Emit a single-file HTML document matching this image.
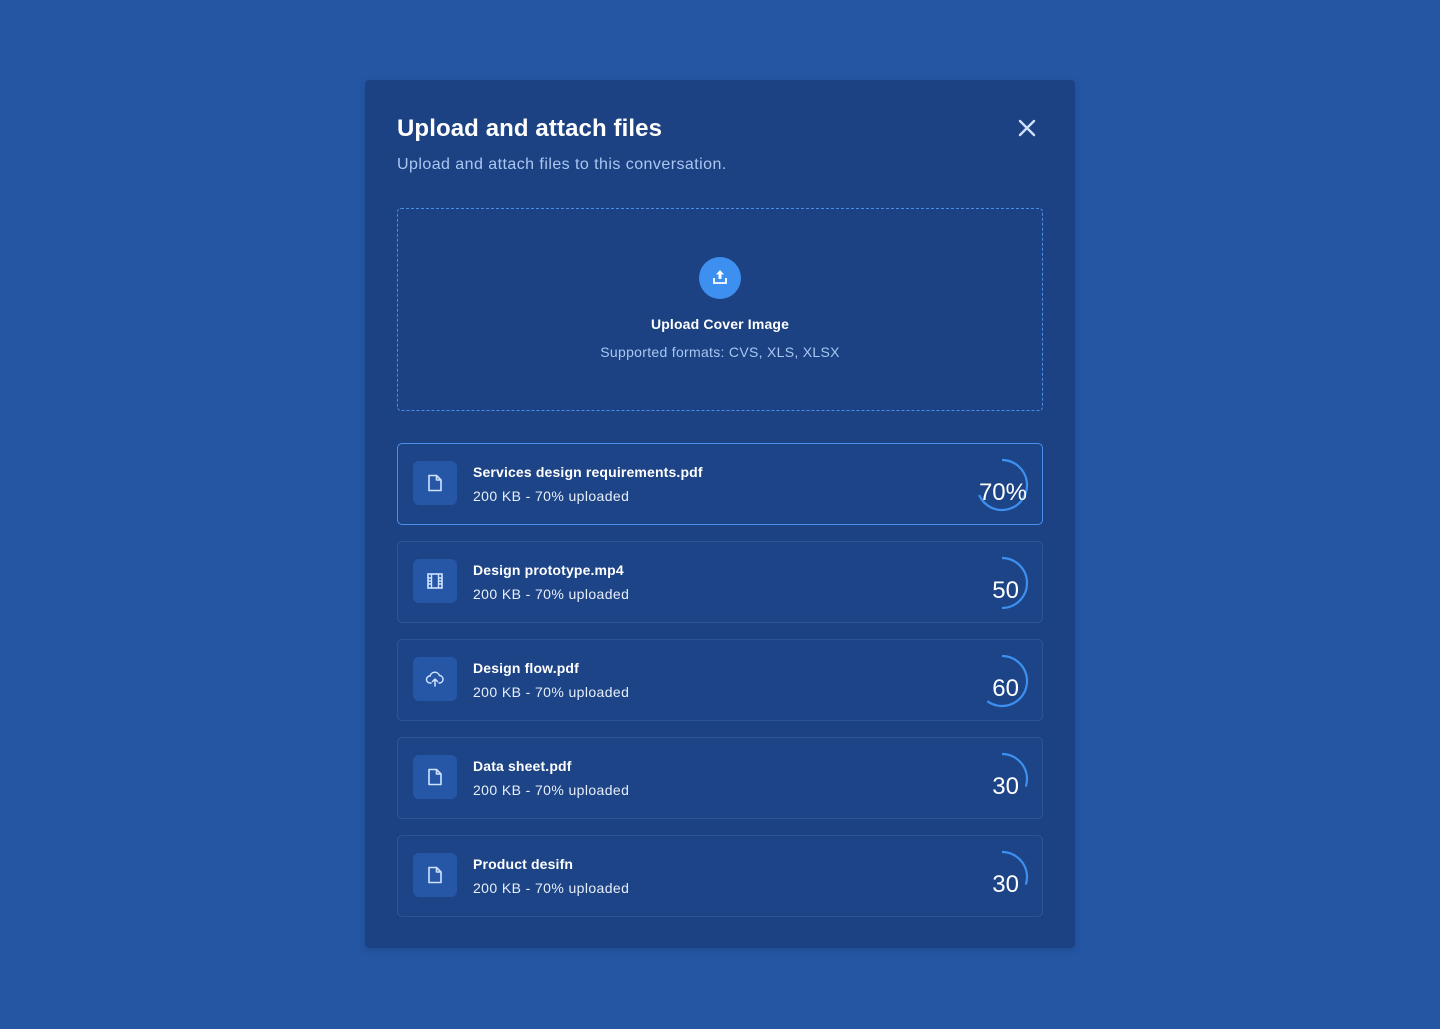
<!DOCTYPE html>
<html><head><meta charset="utf-8"><style>
*{margin:0;padding:0;box-sizing:border-box}
body{width:1440px;height:1029px;background:#2456a3;font-family:"Liberation Sans",sans-serif;position:relative;overflow:hidden}
.modal{position:absolute;left:365px;top:80px;width:710px;height:868px;background:#1c4283;border-radius:4px;box-shadow:0 2px 8px rgba(0,0,0,.12)}
.a{position:absolute}
.title{left:32px;top:35px;font-size:24px;font-weight:bold;color:#fff;letter-spacing:.1px}
.sub{left:32px;top:76px;font-size:16px;color:#a9c7f2;letter-spacing:.45px}
.drop{left:32px;top:128px;width:646px;height:203px;border:1px dashed #4a8fe6;border-radius:4px}
.card{position:absolute;left:32px;width:646px;height:82px;border:1px solid #2c5597;border-radius:5px;background:#1d4486}
.card.act{border-color:#4a90ec}
.ib{position:absolute;left:15px;top:17px;width:44px;height:44px;border-radius:6px;background:#2557a6}
.ib svg{position:absolute;left:12px;top:12px}
.nm{position:absolute;left:75px;top:20px;font-size:14px;font-weight:bold;color:#fff;letter-spacing:.15px}
.sz{position:absolute;left:75px;top:44px;font-size:14px;color:#e6eefb;letter-spacing:.4px}
.pg{position:absolute;right:12px;top:14px;width:56px;height:54px}
.pt{position:absolute;right:23px;top:35px;font-size:24px;color:#fff}
</style></head><body>
<div class="modal">
<div class="a title">Upload and attach files</div>
<div class="a sub">Upload and attach files to this conversation.</div>
<svg class="a" style="left:653px;top:39px" width="18" height="18" viewBox="0 0 18 18"><path d="M2 2L16 16M16 2L2 16" stroke="#cfe0fb" stroke-width="2.4" stroke-linecap="round"/></svg>
<div class="a drop">
 <div class="a" style="left:301px;top:48px;width:42px;height:42px;border-radius:50%;background:#3d8ff0"></div>
 <svg class="a" style="left:313px;top:59px" width="18" height="18" viewBox="0 0 18 18"><path d="M9 2L5 6.5H7.5V11H10.5V6.5H13Z" fill="#fff"/><path d="M3 10V15H15V10" stroke="#fff" stroke-width="1.8" fill="none"/></svg>
 <div class="a" style="left:0;width:644px;top:107px;text-align:center;font-size:14px;font-weight:bold;color:#fff;letter-spacing:.15px">Upload Cover Image</div>
 <div class="a" style="left:0;width:644px;top:135px;text-align:center;font-size:14px;color:#a9c7f2;letter-spacing:.3px">Supported formats: CVS, XLS, XLSX</div>
</div>

<div class="card act" style="top:363px">
 <div class="ib"><svg width="20" height="20" viewBox="0 0 20 20"><path d="M4 2.5H11.5L16 7V17.5H4Z M11.5 2.5V7H16" stroke="#cfe3ff" stroke-width="1.6" fill="none" stroke-linejoin="round"/></svg></div>
 <div class="nm">Services design requirements.pdf</div><div class="sz">200 KB - 70% uploaded</div>
 <svg class="pg" viewBox="0 0 56 54"><path d="M28 2 A25 25 0 1 1 5.1 37.0" stroke="#3d8ff0" stroke-width="2.2" fill="none"/></svg>
 <div class="pt" style="right:15px">70%</div>
</div>
<div class="card" style="top:461px">
 <div class="ib"><svg width="20" height="20" viewBox="0 0 20 20"><rect x="3" y="3" width="14" height="14" stroke="#cfe3ff" stroke-width="1.6" fill="none"/><path d="M6.5 3V17M13.5 3V17M3 7H6.5M3 10H6.5M3 13H6.5M13.5 7H17M13.5 10H17M13.5 13H17" stroke="#cfe3ff" stroke-width="1.4"/></svg></div>
 <div class="nm">Design prototype.mp4</div><div class="sz">200 KB - 70% uploaded</div>
 <svg class="pg" viewBox="0 0 56 54"><path d="M28 2 A25 25 0 0 1 28 52" stroke="#3d8ff0" stroke-width="2.2" fill="none"/></svg>
 <div class="pt">50</div>
</div>
<div class="card" style="top:559px">
 <div class="ib"><svg width="20" height="20" viewBox="0 0 20 20"><path d="M6 14H5A3.5 3.5 0 0 1 5 7A5 5 0 0 1 14.5 6.5A3.8 3.8 0 0 1 15 14H14" stroke="#cfe3ff" stroke-width="1.5" fill="none" stroke-linecap="round"/><path d="M10 17V10M7.5 12.5L10 10L12.5 12.5" stroke="#cfe3ff" stroke-width="1.5" fill="none" stroke-linecap="round"/></svg></div>
 <div class="nm">Design flow.pdf</div><div class="sz">200 KB - 70% uploaded</div>
 <svg class="pg" viewBox="0 0 56 54"><path d="M28 2 A25 25 0 1 1 13.3 47.2" stroke="#3d8ff0" stroke-width="2.2" fill="none"/></svg>
 <div class="pt">60</div>
</div>
<div class="card" style="top:657px">
 <div class="ib"><svg width="20" height="20" viewBox="0 0 20 20"><path d="M4 2.5H11.5L16 7V17.5H4Z M11.5 2.5V7H16" stroke="#cfe3ff" stroke-width="1.6" fill="none" stroke-linejoin="round"/></svg></div>
 <div class="nm">Data sheet.pdf</div><div class="sz">200 KB - 70% uploaded</div>
 <svg class="pg" viewBox="0 0 56 54"><path d="M28 2 A25 25 0 0 1 51.8 34.7" stroke="#3d8ff0" stroke-width="2.2" fill="none"/></svg>
 <div class="pt">30</div>
</div>
<div class="card" style="top:755px">
 <div class="ib"><svg width="20" height="20" viewBox="0 0 20 20"><path d="M4 2.5H11.5L16 7V17.5H4Z M11.5 2.5V7H16" stroke="#cfe3ff" stroke-width="1.6" fill="none" stroke-linejoin="round"/></svg></div>
 <div class="nm">Product desifn</div><div class="sz">200 KB - 70% uploaded</div>
 <svg class="pg" viewBox="0 0 56 54"><path d="M28 2 A25 25 0 0 1 51.8 34.7" stroke="#3d8ff0" stroke-width="2.2" fill="none"/></svg>
 <div class="pt">30</div>
</div>
</div>
</body></html>
